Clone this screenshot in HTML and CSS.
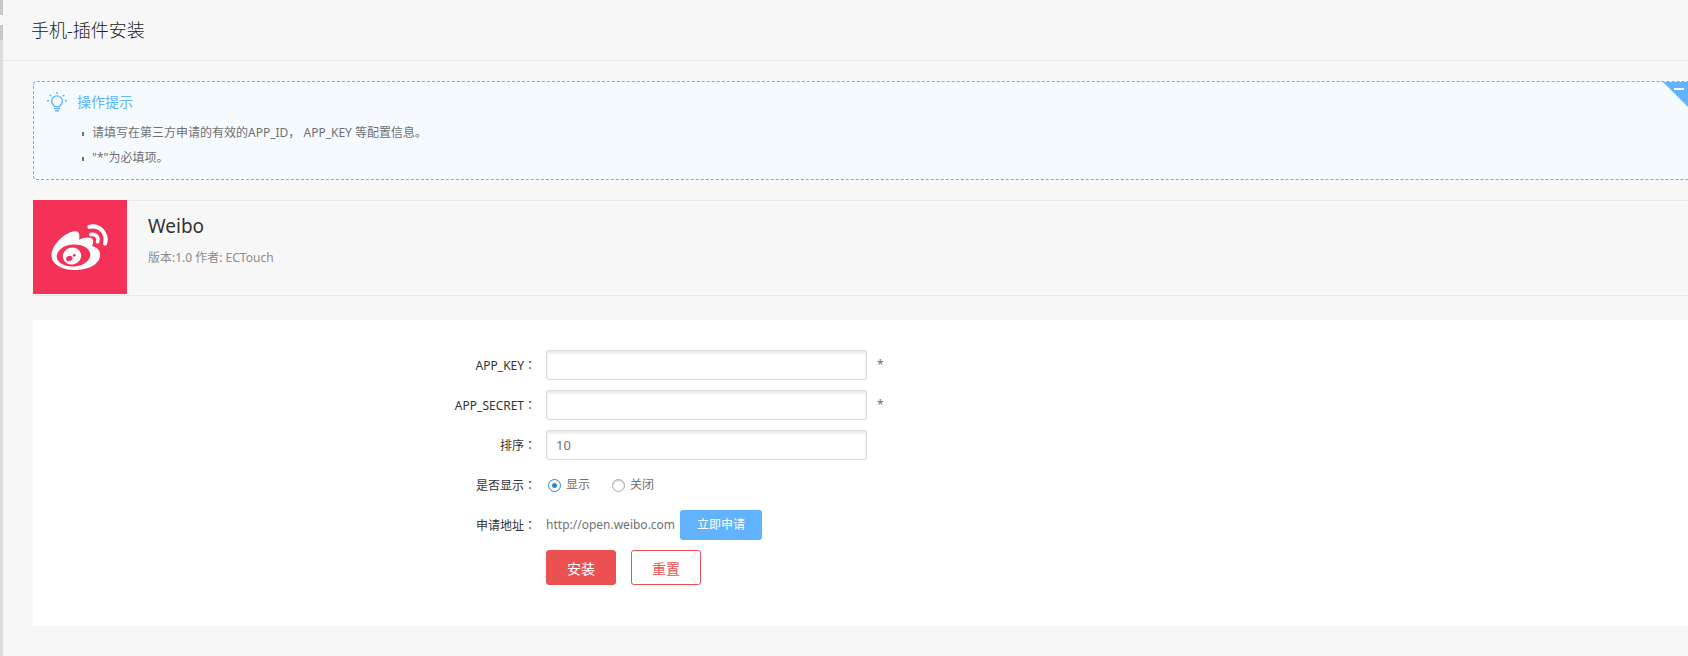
FILE: index.html
```html
<!DOCTYPE html>
<html lang="zh-CN">
<head>
    <meta charset="UTF-8">
    <meta name="viewport" content="width=device-width, initial-scale=1.0">
    <title>手机-插件安装</title>
    <link rel="stylesheet" href="styles.css">
</head>
<body>
    <div class="side-edge">
        <div class="side-toggle"></div>
    </div>

    <div class="main">
        <header class="title">
            <h1>手机-插件安装</h1>
        </header>

        <div class="content">
            <!-- Operation tips -->
            <section class="explanation">
                <div class="ex-tit">
                    <svg class="ex-icon" width="20" height="20" viewBox="0 0 20 20" fill="none" stroke="#62b3ff" stroke-width="1.4">
                        <path d="M7.6 14.6C7.4 13.5 4.6 12.4 4.6 9.3a5.4 5.4 0 0 1 10.8 0c0 3.1-2.8 4.2-3 5.3z"/>
                        <path d="M7 16.6h6M8.2 18.8h3.6"/>
                        <path d="M10 0v2M0 8.8h2M18 8.8h2M2.6 2.8l1.6 1.4M17.4 2.8l-1.6 1.4"/>
                    </svg>
                    <h4>操作提示</h4>
                </div>
                <ul>
                    <li>请填写在第三方申请的有效的APP_ID， APP_KEY 等配置信息。</li>
                    <li>"*"为必填项。</li>
                </ul>
                <button type="button" class="ex-fold" aria-label="收起提示"></button>
            </section>

            <!-- Plugin info -->
            <section class="plugin">
                <svg class="plugin-logo" width="94" height="94" viewBox="0 0 94 94">
                    <rect width="94" height="94" fill="#f43157"/>
                    <path fill="#fff" d="M18.500 55C18.500 46 31 32 42 31.300C46 31 47 34 46 39.500C51 37.500 58 36 60 40C60.500 42 60 44 59 46C64 47.500 67.500 50 67 56C66 65 54 70 42 70C29 70 18.500 64.500 18.500 55Z"/>
                    <ellipse cx="40.500" cy="55.500" rx="16.800" ry="11" fill="#f43157" transform="rotate(-5 40.500 55.500)"/>
                    <ellipse cx="39" cy="56" rx="9.200" ry="8.400" fill="#fff" transform="rotate(-12 39 56)"/>
                    <ellipse cx="36.300" cy="58.500" rx="3.300" ry="2.600" fill="#f43157" transform="rotate(-20 36.300 58.500)"/>
                    <circle cx="41.300" cy="55.300" r="1.400" fill="#f43157"/>
                    <g fill="none" stroke="#fff" stroke-linecap="round">
                        <path stroke-width="4.200" d="M56.500 26.800C66 24.500 75 33 72 43.500"/>
                        <path stroke-width="3.600" d="M57.800 34.600C63 33.500 66 37.500 64.600 41.800"/>
                    </g>
                </svg>
                <div class="plugin-info">
                    <h2>Weibo</h2>
                    <p>版本:1.0 作者: ECTouch</p>
                </div>
            </section>

            <!-- Config form -->
            <form class="panel" action="#" method="post">
                <div class="item">
                    <label class="label" for="app_key">APP_KEY<span class="colon" lang="zh-TW">：</span></label>
                    <div class="value">
                        <input type="text" class="text" id="app_key" name="app_key">
                        <span class="require">*</span>
                    </div>
                </div>
                <div class="item">
                    <label class="label" for="app_secret">APP_SECRET<span class="colon" lang="zh-TW">：</span></label>
                    <div class="value">
                        <input type="text" class="text" id="app_secret" name="app_secret">
                        <span class="require">*</span>
                    </div>
                </div>
                <div class="item">
                    <label class="label" for="sort">排序<span class="colon" lang="zh-TW">：</span></label>
                    <div class="value">
                        <input type="text" class="text" id="sort" name="sort" value="10">
                    </div>
                </div>
                <div class="item">
                    <span class="label">是否显示<span class="colon" lang="zh-TW">：</span></span>
                    <div class="value radios">
                        <input type="radio" id="show_1" name="status" value="1" checked>
                        <label for="show_1">显示</label>
                        <input type="radio" id="show_0" name="status" value="0">
                        <label for="show_0">关闭</label>
                    </div>
                </div>
                <div class="item">
                    <span class="label">申请地址<span class="colon" lang="zh-TW">：</span></span>
                    <div class="value address">
                        <span>http://open.weibo.com</span>
                        <a href="http://open.weibo.com" class="btn-apply">立即申请</a>
                    </div>
                </div>
                <div class="item">
                    <span class="label"></span>
                    <div class="value actions">
                        <button type="submit" class="btn">安装</button>
                        <button type="reset" class="btn btn-reset">重置</button>
                    </div>
                </div>
            </form>
        </div>
    </div>
</body>
</html>
```
FILE: styles.css
```css
* {
    box-sizing: border-box;
}

body {
    margin: 0;
    display: flex;
    min-height: 100vh;
    font-family: "Noto Sans", "Noto Sans CJK SC", sans-serif;
    font-size: 12px;
    line-height: 20px;
    color: #707070;
    background-color: #f7f7f7;
}

h1, h2, h4, p, ul {
    margin: 0;
    padding: 0;
    font-weight: normal;
}

input, button {
    font-family: inherit;
}

/* Collapsed edge of the side menu */
.side-edge {
    width: 3px;
    flex-shrink: 0;
    background-color: #dcdcdc;
}

.side-toggle {
    height: 40px;
    background: linear-gradient(#c8c8c8 15px, #f7f7f7 15px, #f7f7f7 25px, #c8c8c8 25px);
}

.main {
    flex: 1;
    min-width: 0;
}

.title {
    height: 61px;
    padding-left: 28px;
    border-bottom: 1px solid #e2e8ea;
}

.title h1 {
    font-size: 18px;
    line-height: 60px;
    font-weight: 300;
    color: #222;
}

.content {
    padding: 20px 0 30px 30px;
}

.explanation {
    position: relative;
    padding: 8px 13px 9px;
    border: 1px dashed #62b3ff;
    border-right: 0;
    border-radius: 4px 0 0 4px;
    background-color: #f5faff;
}

.ex-tit {
    display: flex;
    align-items: center;
    gap: 10px;
    height: 24px;
}

.ex-tit h4 {
    font-size: 14px;
    color: #62b3ff;
}

.explanation ul {
    padding: 6px 0 0 35px;
    list-style: none;
}

.explanation li {
    height: 25px;
    line-height: 25px;
}

.explanation li::before {
    content: "";
    display: inline-block;
    width: 2px;
    height: 4px;
    margin-right: 8px;
    vertical-align: middle;
    background-color: #707070;
}

/* Full-width colon centred in its cell */
.colon {
    font-family: "Noto Sans CJK TC", sans-serif;
}

.ex-fold {
    position: absolute;
    top: 0;
    right: 0;
    width: 25px;
    height: 25px;
    padding: 0;
    border: 0;
    background-color: #62b3ff;
    clip-path: polygon(0 0, 100% 0, 100% 100%);
    cursor: pointer;
}

.ex-fold::before {
    content: "";
    position: absolute;
    top: 6px;
    right: 4px;
    width: 10px;
    height: 2px;
    background-color: #fff;
}

.plugin {
    display: flex;
    gap: 21px;
    height: 96px;
    margin-top: 20px;
    background: linear-gradient(#e6e6e6, #e6e6e6) top / 100% 1px no-repeat;
    border-bottom: 1px solid #e6e6e6;
}

.plugin-logo {
    flex-shrink: 0;
}

.plugin-info h2 {
    margin-top: 11px;
    font-size: 19px;
    line-height: 30px;
    color: #333;
}

.plugin-info p {
    margin-top: 7px;
    color: #8c8c8c;
}

.panel {
    margin-top: 24px;
    padding: 30px 0 40px;
    background-color: #fff;
}

.item {
    display: flex;
    height: 30px;
    margin-bottom: 10px;
    line-height: 30px;
}

.item:last-child {
    height: 36px;
    margin-bottom: 0;
}

.label {
    width: 31%;
    padding-right: 10px;
    text-align: right;
    color: #333;
}

.value {
    flex: 1;
    display: flex;
    align-items: center;
}

.text {
    width: 321px;
    height: 30px;
    padding: 0 9px;
    font-size: 13px;
    color: #707070;
    border: 1px solid #dbdbdb;
    border-radius: 2px;
    background-color: #fff;
    box-shadow: inset 0 2px 3px rgba(0, 0, 0, 0.1);
    outline: 0;
}

.require {
    margin-left: 10px;
}

.radios input {
    appearance: none;
    width: 13px;
    height: 13px;
    margin: 0 5px 0 2px;
    border: 1px solid #aaa;
    border-radius: 50%;
    box-shadow: inset 0 1px 1px rgba(0, 0, 0, 0.2);
}

.radios input:checked {
    border-color: #1e88e5;
    background: radial-gradient(circle, #1e88e5 2px, #fff 3px);
    box-shadow: none;
}

.radios label {
    margin-right: 20px;
}

.address {
    gap: 5px;
}

.btn-apply {
    width: 82px;
    height: 30px;
    text-align: center;
    text-decoration: none;
    color: #fff;
    border-radius: 3px;
    background-color: #62b3ff;
}

.actions {
    gap: 15px;
    align-items: flex-start;
}

.btn {
    width: 70px;
    height: 35px;
    padding: 0;
    font-size: 14px;
    color: #fff;
    border: 1px solid #ec5151;
    border-radius: 3px;
    background-color: #ec5151;
    cursor: pointer;
}

.btn-reset {
    color: #ec5151;
    background-color: #fff;
}
```
